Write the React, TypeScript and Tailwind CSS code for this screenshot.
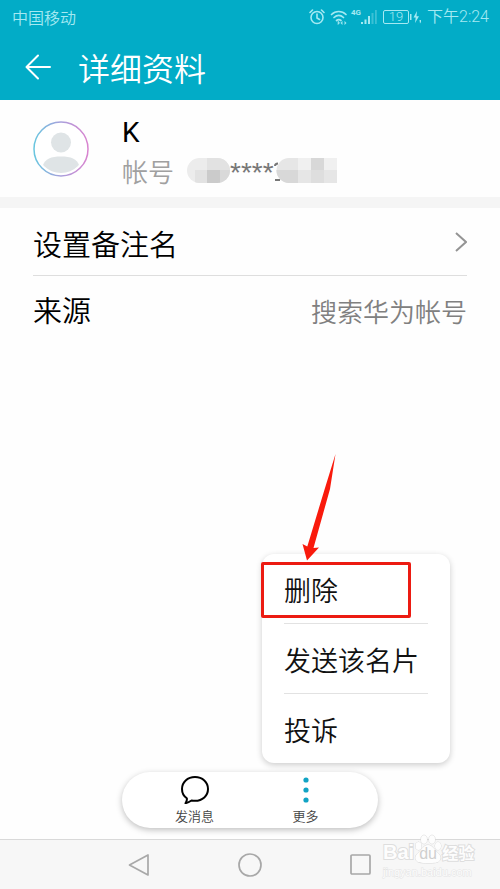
import { useState } from "react";

const menuItems = ["删除", "发送该名片", "投诉"];

function StatusBar() {
    return (
        <div className="flex h-[34px] items-center justify-between pl-3 pr-[11px] text-base leading-6 text-[#a5e9f2]">
            <span>中国移动</span>
            <div className="flex items-center">
                <svg className="mr-[5px] size-4" viewBox="0 0 16 16" fill="none" stroke="currentColor" strokeWidth="1.6" strokeLinecap="round">
                    <circle cx="8" cy="8.5" r="6" />
                    <path d="M8 5v4l2.5 1.5M1 3.5 3.5 1M15 3.5 12.5 1" />
                </svg>
                <svg className="mr-[3px] h-4 w-[18px]" viewBox="0 0 18 16" fill="none" stroke="currentColor" strokeWidth="1.7" strokeLinecap="round">
                    <path d="M1.500 5.500c4-4 10.500-4 14.500 0M4 8.500c3-2.800 6.500-2.800 9.500 0M6.500 11.500c1.500-1.200 3-1.200 4.500 0" />
                    <path d="M8 12.500v3l1.500-1.500zM12 12.800 10.800 14l1.200 1.200zM15 12.800l1.200 1.200-1.200 1.200z" fill="currentColor" strokeWidth=".6" />
                </svg>
                <div className="mr-[6px] flex items-start">
                    <span className="font-['Roboto',sans-serif] text-[8px] font-bold leading-[8px]">4G</span>
                    <svg className="h-4 w-4" viewBox="0 0 16 16" fill="currentColor">
                        <path d="M0 13h2v2H0zM3.5 10.5h2V15h-2zM7 7h2v8H7z" />
                        <path d="M10.5 4h2v11h-2zM14 1h1.800v14H14z" opacity=".35" />
                    </svg>
                </div>
                <div className="flex h-[14px] w-[26px] items-center justify-center rounded-xs border border-current font-['Roboto',sans-serif] text-[13px] leading-3">19</div>
                <svg className="mr-[5px] h-[14px] w-[13px]" viewBox="0 0 13 14" fill="currentColor">
                    <path d="M1 4h1.500v6H1zM8 1 4.500 7.500h2.200L6 13l4-6.800H7.500zM10.500 10H12v2l-1 1.500z" />
                </svg>
                <span className="font-['Roboto','Noto_Sans_CJK_SC',sans-serif]">下午2:24</span>
            </div>
        </div>
    );
}

function Avatar() {
    return (
        <svg className="size-14 shrink-0" viewBox="0 0 56 56">
            <defs>
                <linearGradient id="ring" x1="0" y1="0" x2="1" y2="0">
                    <stop offset="0" stopColor="#68c6df" />
                    <stop offset=".5" stopColor="#a9a0dc" />
                    <stop offset="1" stopColor="#d983cf" />
                </linearGradient>
                <clipPath id="face">
                    <circle cx="28" cy="28" r="24" />
                </clipPath>
            </defs>
            <circle cx="28" cy="28" r="27" fill="#fff" stroke="url(#ring)" strokeWidth="1.5" />
            <g fill="#dfe4e6" clipPath="url(#face)">
                <circle cx="28" cy="21.5" r="10" />
                <path d="M10 52V44c2-6 8-8.500 18-8.500S44 38 46 44v8z" />
            </g>
        </svg>
    );
}

// account number with its digits hidden
function MaskedAccount() {
    return (
        <span className="flex items-center">
            <svg className="h-[25px] w-[43px]" viewBox="0 0 43 25">
                <defs>
                    <clipPath id="left">
                        <rect width="43" height="25" rx="12.5" />
                    </clipPath>
                </defs>
                <g clipPath="url(#left)">
                    <path fill="#ececec" d="M0 0h43v25H0z" />
                    <path fill="#e2e2e2" d="M20 0h23v12H20zM8 12h12v13H8z" />
                    <path fill="#cbcbcb" d="M20 12h13v13H20z" />
                    <path fill="#d9d9d9" d="M33 12h10v13H33z" />
                </g>
            </svg>
            <span className="pt-1 font-['Liberation_Sans',sans-serif] text-[28px] font-normal leading-8 text-[#777]">****</span>
            <svg className="h-[25px] w-[63px]" viewBox="0 0 63 25">
                <defs>
                    <clipPath id="right">
                        <path d="M15 0h48v25H15A12.5 12.5 0 0 1 15 0z" />
                    </clipPath>
                </defs>
                <path d="M1 8c0-1.500 1.500-2.500 3-2.500M1 22h5" fill="none" stroke="#777" strokeWidth="2" />
                <g clipPath="url(#right)">
                    <path fill="#e6e6e6" d="M0 0h63v25H0z" />
                    <path fill="#d8d8d8" d="M0 12h24v13H0zM37 0h13v12H37z" />
                    <path fill="#f0f0f0" d="M24 0h13v12H24zM50 0h13v12H50z" />
                    <path fill="#dedede" d="M37 12h13v13H37z" />
                </g>
            </svg>
        </span>
    );
}

function Watermark() {
    return (
        <div className="pointer-events-none absolute right-[22px] top-[-6px] flex w-[95px] flex-col whitespace-nowrap text-[#fdfdfd]">
            <div className="flex items-end font-bold [paint-order:stroke] [-webkit-text-stroke:2px_#dedede]">
                <span className="font-['Liberation_Sans',sans-serif] text-xl leading-6">Bai</span>
                <div className="relative">
                    <svg className="h-[30px] w-7" viewBox="0 0 28 30" fill="#fdfdfd" stroke="#d8d8d8">
                        <ellipse cx="4.5" cy="12" rx="3" ry="4" />
                        <ellipse cx="10" cy="5.5" rx="3" ry="4.300" />
                        <ellipse cx="18" cy="5.5" rx="3" ry="4.300" />
                        <ellipse cx="24" cy="12" rx="3" ry="4" />
                        <path d="M14 11c4 0 6 4 9 7s4.500 5 3 8-6 3-12 3-10.500 0-12-3 0-5 3-8 5-7 9-7z" />
                    </svg>
                    <span className="absolute inset-x-0 bottom-0 text-center font-['Liberation_Sans',sans-serif] text-base font-normal leading-5 text-[#cfcfcf] [-webkit-text-stroke:0px]">du</span>
                </div>
                <span className="text-base leading-6">经验</span>
            </div>
            <span className="font-['Liberation_Sans',sans-serif] text-[11px] font-normal leading-4 [paint-order:stroke] [-webkit-text-stroke:1px_#e4e4e4]">jingyan.baidu.com</span>
        </div>
    );
}

export default function ContactDetailPage() {
    const [menuOpen, setMenuOpen] = useState(true);

    return (
        <div className="relative flex min-h-screen w-full flex-col bg-[#fefefe] font-['Noto_Sans_CJK_SC',sans-serif] font-[350] text-black">
            <header className="bg-[#02acc7]">
                <StatusBar />
                <div className="flex h-[66px] items-center gap-[27px] pl-[25px] text-white">
                    <button type="button" aria-label="返回">
                        <svg className="block h-[26px] w-[26px]" viewBox="0 0 26 26" fill="none" stroke="currentColor" strokeWidth="2" strokeLinecap="round" strokeLinejoin="round">
                            <path d="M25 13H2M13 1.500 1.500 13 13 24.500" />
                        </svg>
                    </button>
                    <h1 className="text-[32px] leading-10">详细资料</h1>
                </div>
            </header>

            <main className="flex-1">
                <section className="flex h-[97px] items-center gap-[33px] px-[33px]">
                    <Avatar />
                    <div className="pt-1">
                        <p className="font-['Roboto',sans-serif] text-[28px] font-normal leading-10">K</p>
                        <div className="flex items-center gap-[13px] text-[26px] leading-8 text-[#a0a0a0]">
                            <span>帐号</span>
                            <MaskedAccount />
                        </div>
                    </div>
                </section>
                <div className="h-[11px] bg-[#f5f5f5]" />
                <section className="px-[33px]">
                    <button type="button" className="flex h-[68px] w-full items-center justify-between border-b border-[#dedede] pt-1 text-[29px]">
                        <span>设置备注名</span>
                        <svg className="mb-1 h-5 w-3" viewBox="0 0 12 20" fill="none" stroke="#949494" strokeWidth="2">
                            <path d="M1 1l10 9-10 9" />
                        </svg>
                    </button>
                    <div className="flex h-[68px] items-center justify-between text-[29px]">
                        <span>来源</span>
                        <span className="text-[26px] text-[#808080]">搜索华为帐号</span>
                    </div>
                </section>
            </main>

            {menuOpen && (
                <div className="absolute bottom-[126px] right-[50px] w-[188px]">
                    <ul className="rounded-xl bg-white px-[22px] shadow-[0_2px_6px_rgba(0,0,0,0.2)]">
                        {menuItems.map((item) => (
                            <li key={item} className="border-b border-[#e2e2e2] last:border-b-0">
                                <button type="button" className="flex h-[69px] w-full items-center whitespace-nowrap pt-1 text-[27px] text-[#111]">
                                    {item}
                                </button>
                            </li>
                        ))}
                    </ul>
                    <div className="pointer-events-none absolute -left-px top-2 h-14 w-[150px] rounded-xs border-3 border-[#ec1b12]" />
                    <svg className="pointer-events-none absolute bottom-[202px] left-10 h-[108px] w-9" viewBox="0 0 36 108" fill="#f91a0c">
                        <path d="M33.500 1 28 36 11.500 95l5.500-.5L5 107.500.5 91l4.800 2.500L23 35z" />
                    </svg>
                </div>
            )}

            <div className="mx-auto mb-[11px] flex h-14 w-64 rounded-full bg-white px-[17px] pt-1 text-[13px] leading-4 text-[#444] shadow-[0_2px_6px_rgba(0,0,0,0.25)]">
                <button type="button" className="flex flex-1 flex-col items-center gap-1">
                    <svg className="h-7 w-7" viewBox="0 0 28 28" fill="none" stroke="#000" strokeWidth="2" strokeLinejoin="round">
                        <path d="M14 1C6.500 1 1 6.200 1 13c0 4 1.500 7 4.800 9.300.4 1.700 0 3-1.300 4.900 2.200-.5 4-1.500 6-2.700 1.200.2 2.300.3 3.500.3 7.500 0 13-5 13-11.800S21.500 1 14 1z" />
                    </svg>
                    发消息
                </button>
                <button type="button" className="flex flex-1 flex-col items-center gap-1" aria-expanded={menuOpen} onClick={() => setMenuOpen(!menuOpen)}>
                    <svg className="h-7 w-7" viewBox="0 0 28 28" fill="#11a3c4">
                        <circle cx="14" cy="4" r="2.600" />
                        <circle cx="14" cy="14" r="2.600" />
                        <circle cx="14" cy="24" r="2.600" />
                    </svg>
                    更多
                </button>
            </div>

            <nav className="relative flex h-[50px] items-center justify-center gap-[87px] border-t border-[#d9d9d9] bg-[#f7f7f7] text-[#a8a8a8]">
                <button type="button" aria-label="后退">
                    <svg className="block size-6" viewBox="0 0 24 24" fill="none" stroke="currentColor" strokeWidth="1.700" strokeLinejoin="round">
                        <path d="M21 2v20L2.500 12z" />
                    </svg>
                </button>
                <button type="button" aria-label="主页">
                    <svg className="block size-6" viewBox="0 0 24 24" fill="none" stroke="currentColor" strokeWidth="1.700">
                        <circle cx="12" cy="12" r="11" />
                    </svg>
                </button>
                <button type="button" aria-label="最近">
                    <svg className="block size-6" viewBox="0 0 24 24" fill="none" stroke="currentColor" strokeWidth="1.700">
                        <rect x="2" y="2" width="19" height="19" rx="1" />
                    </svg>
                </button>
                <Watermark />
            </nav>
        </div>
    );
}
